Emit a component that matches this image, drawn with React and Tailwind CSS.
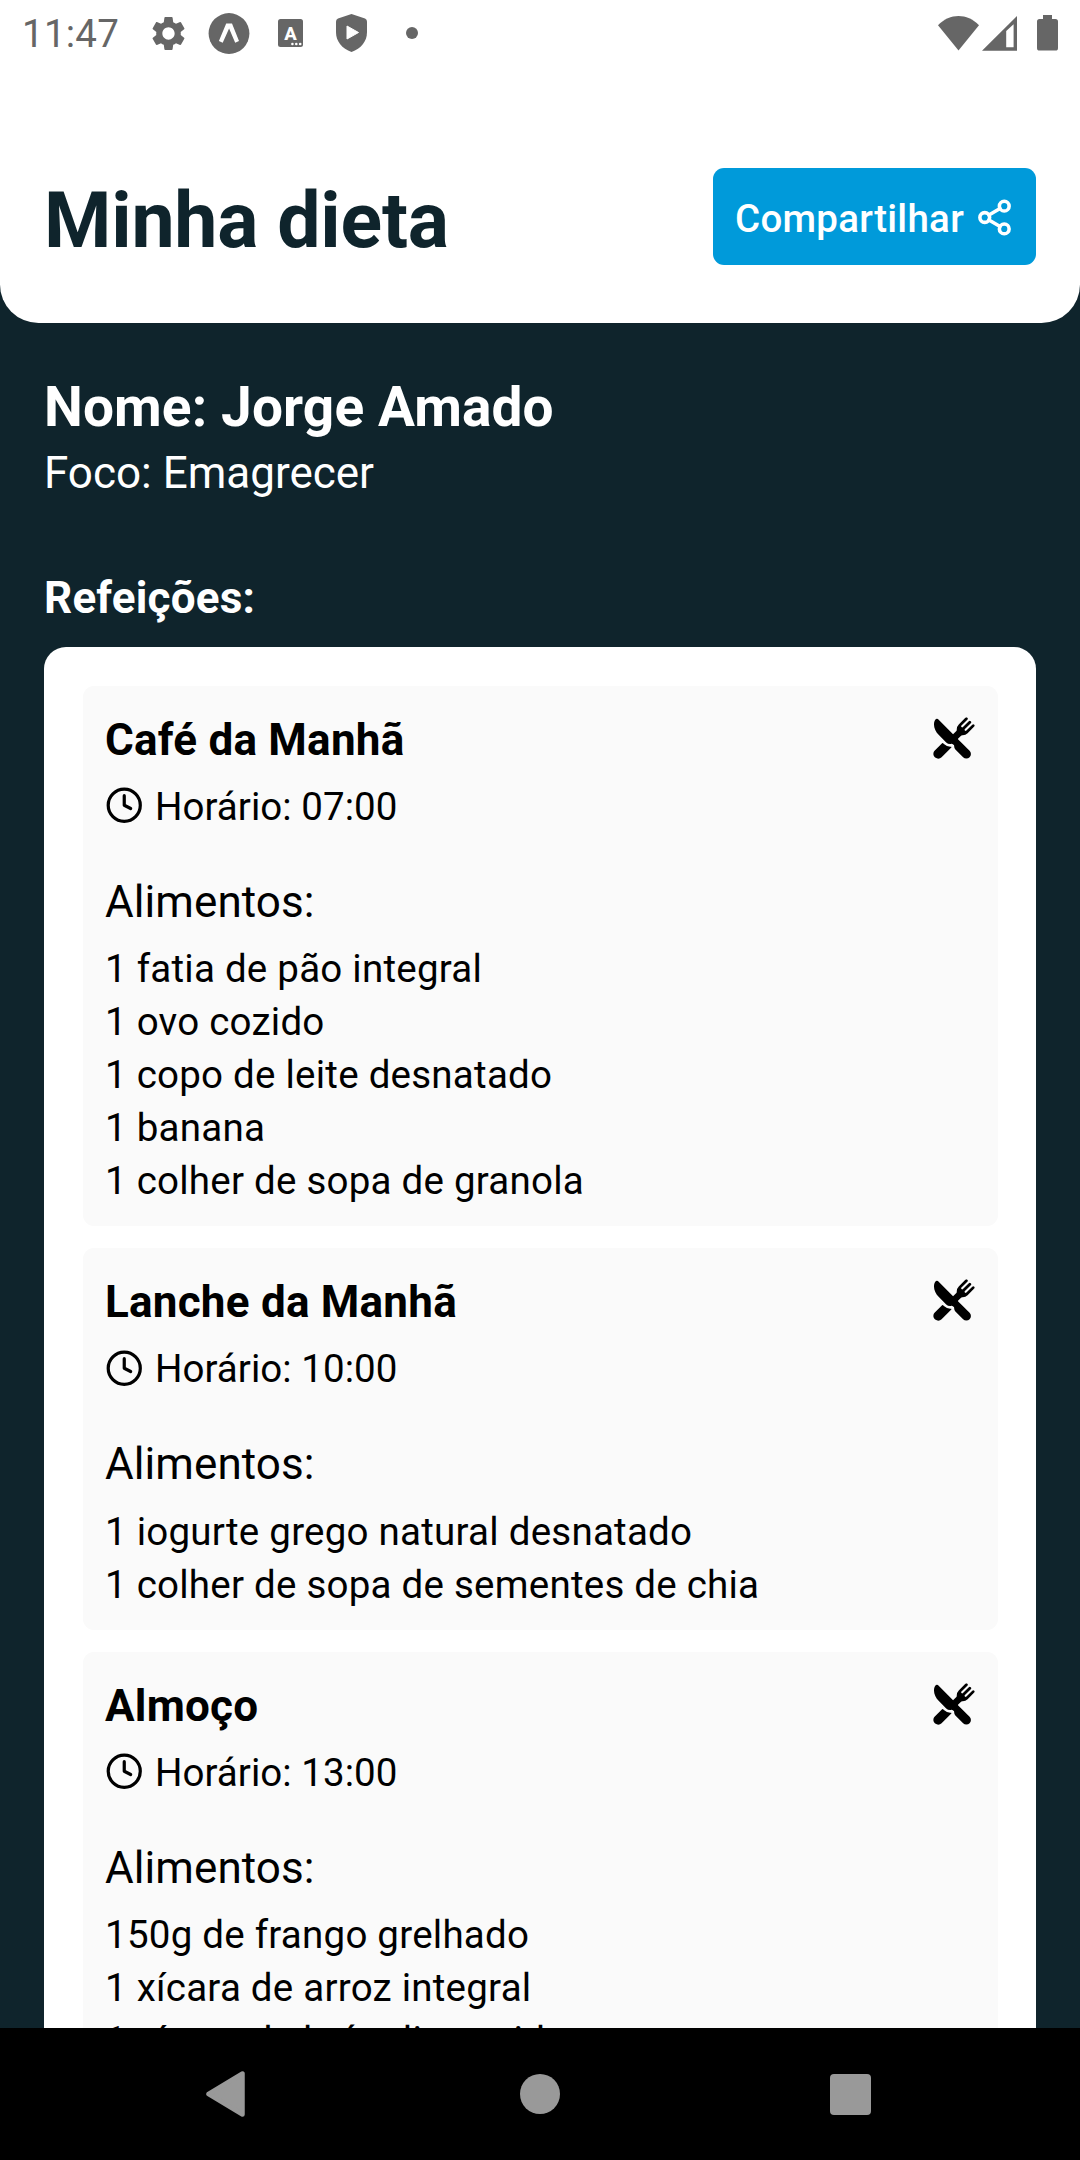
import { FiClock, FiShare2 } from "react-icons/fi";
import { IoRestaurant } from "react-icons/io5";
import { MdSettings } from "react-icons/md";

const meals = [
  {
    name: "Café da Manhã",
    time: "07:00",
    foods: [
      "1 fatia de pão integral",
      "1 ovo cozido",
      "1 copo de leite desnatado",
      "1 banana",
      "1 colher de sopa de granola",
    ],
  },
  {
    name: "Lanche da Manhã",
    time: "10:00",
    foods: ["1 iogurte grego natural desnatado", "1 colher de sopa de sementes de chia"],
  },
  {
    name: "Almoço",
    time: "13:00",
    foods: [
      "150g de frango grelhado",
      "1 xícara de arroz integral",
      "1 xícara de brócolis cozido",
    ],
  },
];

function StatusBar() {
  return (
    <div className="flex h-[66px] items-center justify-between pr-[22px] pl-[22px] text-[#666666]">
      <div className="flex items-center">
        <span className="w-[126px] pt-px text-[38.5px] leading-[66px] tracking-[0.25px]">11:47</span>
        <MdSettings className="size-[41px]" />
        <svg viewBox="0 0 42 42" className="ml-[19px] size-[42px]">
          <circle cx="21" cy="21.5" r="20.4" fill="currentColor" />
          <path d="M18.2 11.4 H24 L31 29 L27.2 30.8 L21.1 16.4 L14.7 30.8 L10.9 29Z" fill="white" />
        </svg>
        <svg viewBox="0 0 25 28" className="ml-[28px] h-7 w-[25px]">
          <rect width="25" height="28" rx="2.5" fill="currentColor" />
          <text x="12.4" y="20.8" textAnchor="middle" fontSize="18.5" fontWeight="800" fill="white">A</text>
          <circle cx="14.4" cy="25" r="1.3" fill="white" />
          <circle cx="18.3" cy="25" r="1.3" fill="white" />
          <circle cx="22.2" cy="25" r="1.3" fill="white" />
        </svg>
        <svg viewBox="0 0 31 38" className="ml-[33px] h-[38px] w-[31px]">
          <path d="M15.5 0 L29 4.6 Q31 5.4 31 7.5 V18 C31 27.5 25 34.5 15.5 38 C6 34.5 0 27.5 0 18 V7.5 Q0 5.4 2 4.6Z" fill="currentColor" />
          <path d="M11 12 L22.5 18.5 L11 25Z" fill="white" stroke="white" strokeWidth="1" strokeLinejoin="round" />
        </svg>
        <span className="ml-[39px] size-3 rounded-full bg-[#666666]" />
      </div>
      <div className="flex items-center">
        <svg viewBox="0 0 41 35" className="h-[35px] w-[41px]">
          <path d="M0 9.2 C12 -3 29 -3 41 9.2 L20.5 34.5Z" fill="currentColor" />
        </svg>
        <svg viewBox="0 0 35 35" className="ml-[3px] size-[35px]">
          <path fillRule="evenodd" d="M0 34.7 L35 0 V34.7Z M24.2 15 V31.2 H31.6 V8.2Z" fill="currentColor" />
        </svg>
        <svg viewBox="0 0 21 36" className="ml-5 h-9 w-[21px]">
          <path d="M6 0 H15 V4 H18.5 Q21 4 21 6.5 V33 Q21 35.6 18.5 35.6 H2.5 Q0 35.6 0 33 V6.5 Q0 4 2.5 4 H6Z" fill="currentColor" />
        </svg>
      </div>
    </div>
  );
}

function MealCard({ meal }) {
  return (
    <article className="rounded-[11px] bg-[#fafafa] px-[22px] pt-[22px] pb-[19px] text-black">
      <div className="flex h-16 justify-between">
        <h2 className="pl-[0.5px] text-[44px] leading-[64px] font-bold tracking-[0.23px]">{meal.name}</h2>
        <IoRestaurant className="mt-2 size-11" />
      </div>
      <div className="flex h-[70px] gap-3">
        <FiClock className="mt-[14.5px] size-[38.5px]" />
        <span className="text-[38.5px] leading-[70px] tracking-[0.05px]">Horário: {meal.time}</span>
      </div>
      <h3 className="mt-[30px] pl-[0.5px] text-[44px] leading-[60px] tracking-[0.08px]">Alimentos:</h3>
      <ul className="mt-[10.5px] pl-[0.5px] text-[38.5px] leading-[53px] tracking-[0.24px]">
        {meal.foods.map((food) => (
          <li key={food}>{food}</li>
        ))}
      </ul>
    </article>
  );
}

function NavigationBar() {
  return (
    <nav className="flex h-[132px] shrink-0 items-center justify-between bg-black pr-[209px] pl-[206px] text-[#999999]">
      <svg viewBox="0 0 39 46" className="h-[46px] w-[39px]">
        <path d="M36.5 2.5 V43.5 L2.5 23Z" fill="currentColor" stroke="currentColor" strokeWidth="4.5" strokeLinejoin="round" />
      </svg>
      <span className="mr-[-14px] ml-[-9px] size-10 rounded-full bg-[#999999]" />
      <span className="size-[41px] rounded bg-[#999999]" />
    </nav>
  );
}

export default function App() {
  return (
    <div className="flex h-[2160px] w-[1080px] flex-col overflow-hidden bg-[#0f242c] font-['Roboto',sans-serif]">
      <header className="h-[323px] shrink-0 rounded-b-[38.5px] bg-white">
        <StatusBar />
        <div className="mt-[102px] flex h-[97px] items-center justify-between px-11">
          <h1 className="pt-2 text-[77px] leading-[90px] font-bold tracking-[-0.2px] text-[#0f242c]">Minha dieta</h1>
          <button className="flex h-[97px] w-[323px] items-center justify-between rounded-[11px] bg-[#009ada] px-[22px] text-white">
            <span className="pt-1 text-[38.5px] leading-[52px] font-medium tracking-[0.28px]">Compartilhar</span>
            <FiShare2 strokeWidth={2.2} className="mt-0.5 size-[39px]" />
          </button>
        </div>
      </header>
      <main className="min-h-0 flex-1 overflow-hidden px-11 pt-[50px] text-white">
        <p className="text-[55px] leading-[68px] font-bold tracking-[0.12px]">Nome: Jorge Amado</p>
        <p className="text-[44px] leading-[64px]">Foco: Emagrecer</p>
        <p className="mt-[63px] text-[44px] leading-[60px] font-bold tracking-[0.2px]">Refeições:</p>
        <section className="mt-[19px] flex flex-col gap-[22px] rounded-[22px] bg-white p-[38.5px]">
          {meals.map((meal) => (
            <MealCard key={meal.name} meal={meal} />
          ))}
        </section>
      </main>
      <NavigationBar />
    </div>
  );
}
